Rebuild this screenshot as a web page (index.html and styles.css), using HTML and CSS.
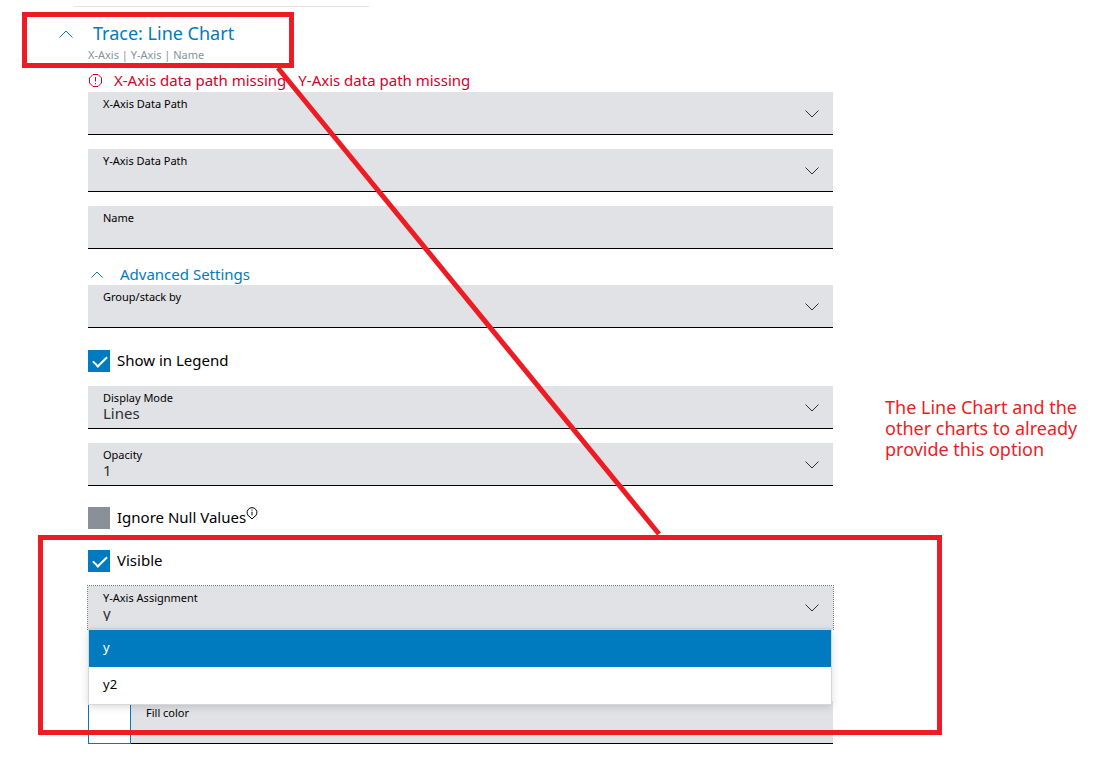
FILE: index.html
```html
<!DOCTYPE html>
<html lang="en">
<head>
  <meta charset="UTF-8">
  <meta name="viewport" content="width=device-width, initial-scale=1.0">
  <title>Trace settings</title>
  <link rel="stylesheet" href="styles.css">
</head>
<body>
  <hr class="divider">

  <div class="layout">
    <form class="trace">
      <button type="button" class="trace-header">
        <svg class="chevron-lg" viewBox="0 0 14 8"><path d="M0.5 7.5 L7 1 L13.5 7.5"/></svg>
        <span class="trace-title">Trace: Line Chart</span>
      </button>
      <div class="trace-subtitle">X-Axis | Y-Axis | Name</div>

      <div class="error">
        <svg class="error-icon" viewBox="0 0 13 13"><path d="M4 0.5h5l3.5 3.5v5l-3.5 3.5h-5l-3.5-3.5v-5z"/><path d="M6.5 3v4.5M6.5 9v1.2"/></svg>
        <span>X-Axis data path missing</span>
        <span>Y-Axis data path missing</span>
      </div>

      <div class="fields">
        <div class="field">
          <label for="x-path">X-Axis Data Path</label>
          <select id="x-path"><option></option></select>
          <svg class="arrow" viewBox="0 0 14 8"><path d="M0.5 0.5 L7 7 L13.5 0.5"/></svg>
        </div>
        <div class="field">
          <label for="y-path">Y-Axis Data Path</label>
          <select id="y-path"><option></option></select>
          <svg class="arrow" viewBox="0 0 14 8"><path d="M0.5 0.5 L7 7 L13.5 0.5"/></svg>
        </div>
        <div class="field">
          <label for="name">Name</label>
          <input type="text" id="name">
        </div>
      </div>

      <button type="button" class="advanced">
        <svg class="chevron-sm" viewBox="0 0 12 7"><path d="M0.5 6.5 L6 1 L11.5 6.5"/></svg>
        <span>Advanced Settings</span>
      </button>

      <div class="field">
        <label for="group">Group/stack by</label>
        <select id="group"><option></option></select>
        <svg class="arrow" viewBox="0 0 14 8"><path d="M0.5 0.5 L7 7 L13.5 0.5"/></svg>
      </div>

      <div class="check">
        <input type="checkbox" id="legend" checked>
        <label for="legend">Show in Legend</label>
      </div>

      <div class="fields">
        <div class="field">
          <label for="mode">Display Mode</label>
          <select id="mode"><option>Lines</option></select>
          <svg class="arrow" viewBox="0 0 14 8"><path d="M0.5 0.5 L7 7 L13.5 0.5"/></svg>
        </div>
        <div class="field">
          <label for="opacity">Opacity</label>
          <select id="opacity"><option>1</option></select>
          <svg class="arrow" viewBox="0 0 14 8"><path d="M0.5 0.5 L7 7 L13.5 0.5"/></svg>
        </div>
      </div>

      <div class="check">
        <input type="checkbox" id="nulls">
        <label for="nulls">Ignore Null Values</label>
        <svg class="info" viewBox="0 0 12 13"><path d="M4 10 A4.9 4.9 0 1 1 8 10 L6 12 Z"/><path d="M6 2.6v1.1M6 4.8v3.6"/></svg>
      </div>

      <div class="check">
        <input type="checkbox" id="visible" checked>
        <label for="visible">Visible</label>
      </div>

      <div class="field focused">
        <label for="assignment">Y-Axis Assignment</label>
        <select id="assignment"><option>y</option><option>y2</option></select>
        <svg class="arrow" viewBox="0 0 14 8"><path d="M0.5 0.5 L7 7 L13.5 0.5"/></svg>
        <ul class="menu" role="listbox">
          <li class="selected" role="option" aria-selected="true">y</li>
          <li role="option" aria-selected="false">y2</li>
        </ul>
      </div>

      <div class="color-row">
        <button type="button" class="swatch" aria-label="Pick color"></button>
        <div class="field">
          <label for="fill">Fill color</label>
          <input type="text" id="fill">
        </div>
      </div>
    </form>

    <p class="note">The Line Chart and the other charts to already provide this option</p>
  </div>

  <!-- markup drawn over the form -->
  <svg class="markup" width="960" height="740">
    <rect x="24.5" y="14.5" width="267" height="51"/>
    <path d="M278 68 L659 534"/>
    <rect x="40.5" y="537.5" width="899" height="195"/>
  </svg>
</body>
</html>
```
FILE: styles.css
```css
* {
  box-sizing: border-box;
}

body {
  margin: 0;
  padding-top: 6px;
  position: relative;
  background: #fff;
  color: #000;
  font-family: "Noto Sans", sans-serif;
  font-size: 15px;
  line-height: 20px;
}

svg {
  fill: none;
  stroke: currentColor;
}

button {
  padding: 0;
  border: none;
  background: none;
  font: inherit;
  color: #007bc0;
  cursor: pointer;
}

.divider {
  width: 295px;
  height: 1px;
  margin: 0 0 0 74px;
  border: none;
  background: #e0e2e5;
}

.layout {
  display: grid;
  grid-template-columns: 1fr 202px;
  column-gap: 52px;
  padding: 13px 20px 14px 88px;
}

/* trace header */
.trace-header {
  display: flex;
  align-items: center;
  gap: 20px;
  margin-left: -29px;
  height: 27px;
}

.chevron-lg {
  width: 14px;
  height: 8px;
}

.trace-title {
  padding-bottom: 2px;
  font-size: 18px;
}

.trace-subtitle {
  font-size: 11px;
  line-height: 16px;
  color: #8a9097;
}

.error {
  display: flex;
  align-items: center;
  gap: 12px;
  margin-top: 7px;
  padding: 0 0 2px 1px;
  height: 22px;
  color: #d50029;
}

.error-icon {
  width: 13px;
  height: 13px;
}

/* fields */
.fields {
  display: flex;
  flex-direction: column;
  gap: 14px;
}

.field {
  position: relative;
  display: flex;
  flex-direction: column;
  height: 43px;
  padding-top: 4px;
  background: #e0e2e5;
  border-bottom: 1px solid #000;
}

.field label {
  padding-left: 15px;
  font-size: 11px;
  line-height: 15px;
}

.field select,
.field input {
  width: 100%;
  height: 16px;
  padding: 0 40px 0 15px;
  border: none;
  outline: none;
  background: none;
  appearance: none;
  font: inherit;
  line-height: 16px;
  color: #2e3033;
}

.arrow {
  position: absolute;
  right: 14px;
  top: 18px;
  width: 14px;
  height: 8px;
  color: #2e3033;
  pointer-events: none;
}

.advanced {
  display: flex;
  align-items: center;
  gap: 17px;
  margin-top: 16px;
  padding: 0 0 2px 3px;
  height: 20px;
}

.chevron-sm {
  width: 12px;
  height: 7px;
}

/* checkboxes */
.check {
  display: flex;
  align-items: center;
  height: 22px;
  margin: 21px 0 14px;
}

.field + .check {
  margin-top: 22px;
}

.check label {
  padding-bottom: 2px;
}

.check input {
  appearance: none;
  position: relative;
  width: 22px;
  height: 22px;
  margin: 0 7px 0 0;
  background: #8a9097;
}

.check input:checked {
  background: #007bc0;
}

.check input:checked::after {
  content: "";
  position: absolute;
  left: 8px;
  top: 3px;
  width: 6px;
  height: 12px;
  border: solid #fff;
  border-width: 0 2px 2px 0;
  transform: rotate(45deg);
}

.info {
  align-self: flex-start;
  width: 12px;
  height: 13px;
}

/* open dropdown */
.focused {
  outline: 1px dotted #71767c;
}

.menu {
  position: absolute;
  left: 0;
  right: 1px;
  top: 43px;
  z-index: 1;
  margin: 0;
  padding: 0;
  list-style: none;
  background: #fff;
  border: 1px solid #d5d7d9;
  box-shadow: 0 2px 8px rgba(0, 0, 0, 0.15);
}

.focused {
  border-bottom-color: #d5d7d9;
}

.menu li {
  height: 37px;
  padding-left: 14px;
  font-size: 13px;
  line-height: 35px;
}

.menu .selected {
  background: #007bc0;
  color: #fff;
}

.color-row {
  display: flex;
  margin-top: 72px;
}

.color-row .field {
  flex: 1;
}

.swatch {
  width: 43px;
  height: 43px;
  background: #fff;
  border: 1px solid #007bc0;
}

/* note and markup */
.note {
  margin: 377px 0 0;
  font-size: 18px;
  line-height: 21px;
  color: #ed1c24;
}

.markup {
  position: absolute;
  left: 0;
  top: 0;
  z-index: 2;
  color: #ed1c24;
  stroke-width: 5;
  pointer-events: none;
}
```
